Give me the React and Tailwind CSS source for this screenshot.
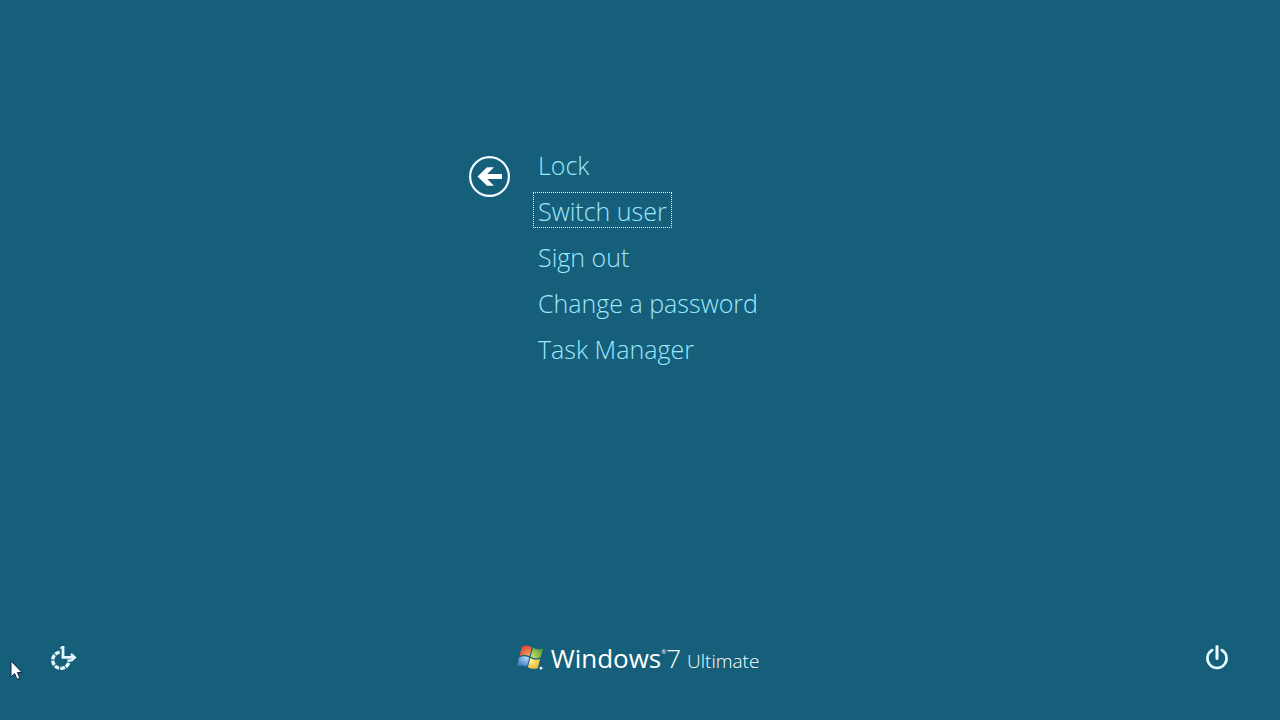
const MENU_ITEMS = ['Lock', 'Switch user', 'Sign out', 'Change a password', 'Task Manager'];

function BackIcon() {
  return (
    <svg viewBox="0 0 42 42" className="size-[42px]" aria-hidden="true">
      <circle cx="20.5" cy="21.5" r="19.4" fill="none" stroke="#f4fdff" strokeWidth="2.2" />
      <path d="M8.5 21.5 L18 12.2 H25 L18.2 19 H33 V24 H18.2 L25 30.8 H18 Z" fill="#fff" />
    </svg>
  );
}

function EaseOfAccessIcon() {
  return (
    <svg viewBox="0 0 28 28" className="size-7" fill="none" stroke="#e4f9ff" aria-hidden="true">
      <path d="M10.6 8.1 A8.2 8.2 0 1 0 20.1 15.4" strokeWidth="3.4" strokeDasharray="4.8 1.1" />
      <path d="M14 2 V13.4 H25" strokeWidth="2.8" />
      <path d="M11.2 4.4 L14 2.6" strokeWidth="1.4" />
      <path d="M22 9.8 L25.8 13.4 L22 17" strokeWidth="2.4" />
    </svg>
  );
}

function PowerIcon() {
  return (
    <svg viewBox="0 0 28 28" className="size-7" fill="none" stroke="#e9fbff" aria-hidden="true">
      <path d="M9.3 6 A9.6 9.6 0 1 0 18.7 6" strokeWidth="2.6" strokeLinecap="round" />
      <path d="M14 2.6 V14.5" strokeWidth="3" strokeLinecap="round" />
    </svg>
  );
}

function WindowsFlag() {
  return (
    <svg viewBox="0 0 28 28" className="size-7" aria-hidden="true">
      <defs>
        <radialGradient id="red" cx="0.8" cy="0.9" r="1">
          <stop offset="0" stopColor="#f9a05c" />
          <stop offset="1" stopColor="#d8442a" />
        </radialGradient>
        <radialGradient id="green" cx="0.1" cy="0.8" r="1">
          <stop offset="0" stopColor="#c5df72" />
          <stop offset="1" stopColor="#5d9f32" />
        </radialGradient>
        <radialGradient id="blue" cx="0.8" cy="0.1" r="1">
          <stop offset="0" stopColor="#b6dcf5" />
          <stop offset="1" stopColor="#3975c4" />
        </radialGradient>
        <radialGradient id="yellow" cx="0.2" cy="0.2" r="1">
          <stop offset="0" stopColor="#fff0a0" />
          <stop offset="1" stopColor="#f1b323" />
        </radialGradient>
      </defs>
      <path d="M5 2.6 Q10 0.2 14.8 3 L12.6 12.2 Q7.6 9.8 2.6 12 Z" fill="url(#red)" />
      <path d="M15.9 3.8 Q20.8 6.6 26 4.5 L23.5 13.6 Q18.5 15.6 13.6 12.8 Z" fill="url(#green)" />
      <path d="M2.2 13.2 Q7.3 11 12.3 13.5 L10 22.7 Q5 20.4 0 22.4 Z" fill="url(#blue)" />
      <path d="M13.2 14.1 Q18.2 16.8 23.1 14.8 L20.8 23.9 Q15.9 26 10.9 23.2 Z" fill="url(#yellow)" />
      <circle cx="24" cy="24.2" r="1.4" fill="#e4f4fa" />
    </svg>
  );
}

function Cursor() {
  return (
    <svg
      viewBox="0 0 13 21"
      className="pointer-events-none absolute bottom-[39px] left-[10px] h-[21px] w-[13px]"
      aria-hidden="true"
    >
      <path
        d="M1 1 V17 L4.6 13.6 L7 19.3 L9.8 18.1 L7.4 12.5 H12 Z"
        fill="#fff"
        stroke="#102a4a"
        strokeWidth="1"
      />
    </svg>
  );
}

function SecurityMenu() {
  return (
    <main className="mx-auto flex w-full max-w-[342px] items-start gap-[22px] pt-[146px]">
      <button type="button" aria-label="Back" className="mt-[9px] shrink-0 rounded-full">
        <BackIcon />
      </button>
      <ul className="flex flex-col items-start gap-[10px]">
        {MENU_ITEMS.map((item) => (
          <li key={item} className="flex">
            <button
              type="button"
              className={[
                'h-9 border px-1 pt-[2px] text-[25px] leading-8 font-light whitespace-nowrap text-[#9ee8fd]',
                item === 'Switch user' ? 'border-dotted border-[#e6f8fc]' : 'border-transparent',
              ].join(' ')}
            >
              {item}
            </button>
          </li>
        ))}
      </ul>
    </main>
  );
}

function Brand() {
  return (
    <div className="flex items-center gap-[6px] pr-1 text-white">
      <WindowsFlag />
      <div className="flex items-baseline pt-1 whitespace-nowrap">
        <span className="text-[26px] leading-8">Windows</span>
        <span className="self-start pt-1 text-[6px] leading-3">®</span>
        <span className="text-[26px] leading-8 font-light">7</span>
        <span className="pl-[6px] text-[19px] leading-8 font-light">Ultimate</span>
      </div>
    </div>
  );
}

export default function App() {
  return (
    <div className="relative flex min-h-screen flex-col justify-between bg-[#155f7b] font-['Open_Sans','Noto_Sans',sans-serif]">
      <SecurityMenu />
      <footer className="flex items-center justify-between px-[49px] pb-[43px]">
        <button type="button" aria-label="Ease of access">
          <EaseOfAccessIcon />
        </button>
        <Brand />
        <button type="button" aria-label="Shut down">
          <PowerIcon />
        </button>
      </footer>
      <Cursor />
    </div>
  );
}
